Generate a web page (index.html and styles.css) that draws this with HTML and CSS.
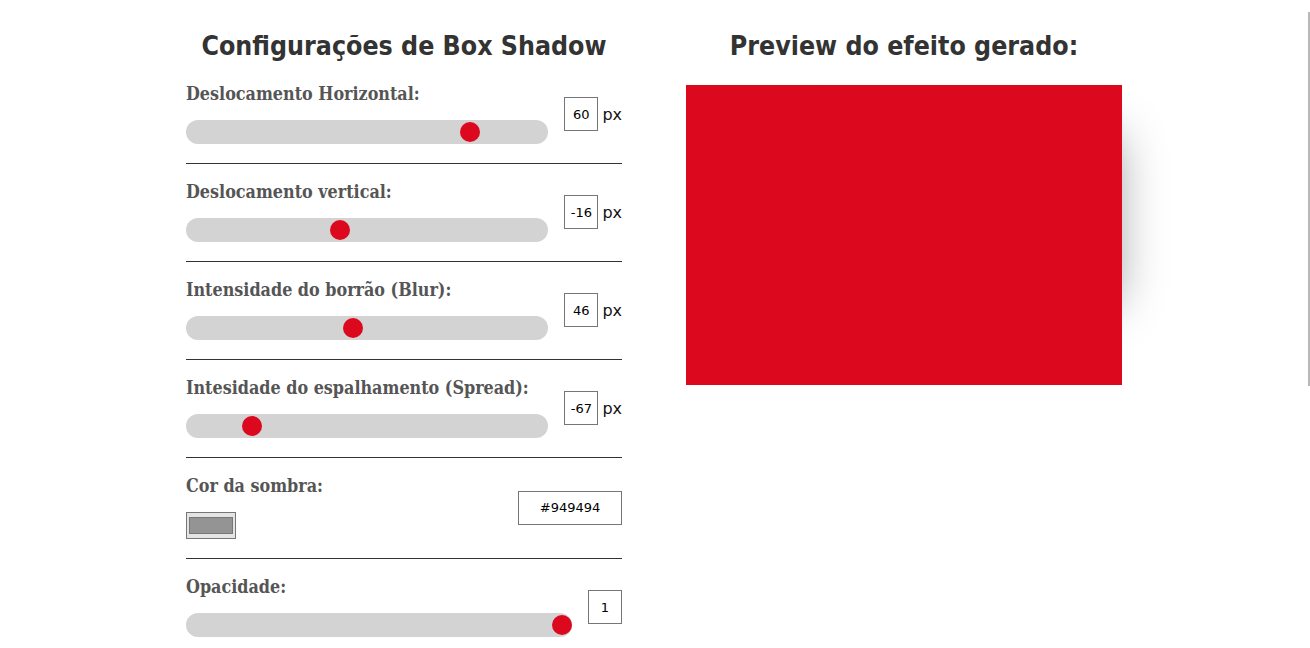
FILE: index.html
```html
<!DOCTYPE html>
<html lang="pt-BR">
<head>
<meta charset="utf-8">
<title>Box Shadow Generator</title>
<link rel="stylesheet" href="styles.css">
</head>
<body>
<div class="page">
  <section class="panel">
    <h2 class="title">Configurações de Box Shadow</h2>

    <div class="field">
      <div class="field-main">
        <label class="field-label">Deslocamento Horizontal:</label>
        <input type="range" class="slider" min="-100" max="100" value="60">
      </div>
      <div class="field-value">
        <input type="text" class="num" value="60"><span class="unit">px</span>
      </div>
    </div>

    <div class="field">
      <div class="field-main">
        <label class="field-label">Deslocamento vertical:</label>
        <input type="range" class="slider" min="-100" max="100" value="-16">
      </div>
      <div class="field-value">
        <input type="text" class="num" value="-16"><span class="unit">px</span>
      </div>
    </div>

    <div class="field">
      <div class="field-main">
        <label class="field-label">Intensidade do borrão (Blur):</label>
        <input type="range" class="slider" min="0" max="100" value="46">
      </div>
      <div class="field-value">
        <input type="text" class="num" value="46"><span class="unit">px</span>
      </div>
    </div>

    <div class="field">
      <div class="field-main">
        <label class="field-label">Intesidade do espalhamento (Spread):</label>
        <input type="range" class="slider" min="-100" max="100" value="-67">
      </div>
      <div class="field-value">
        <input type="text" class="num" value="-67"><span class="unit">px</span>
      </div>
    </div>

    <div class="field">
      <div class="field-main">
        <label class="field-label">Cor da sombra:</label>
        <input type="color" class="color" value="#949494">
      </div>
      <div class="field-value">
        <input type="text" class="hex" value="#949494">
      </div>
    </div>

    <div class="field">
      <div class="field-main">
        <label class="field-label">Opacidade:</label>
        <input type="range" class="slider" min="0" max="1" step="0.1" value="1">
      </div>
      <div class="field-value">
        <input type="text" class="num" value="1">
      </div>
    </div>
  </section>

  <section class="panel">
    <h2 class="title">Preview do efeito gerado:</h2>
    <div class="preview-box"></div>
  </section>
</div>
<div class="scroll-thumb"></div>
</body>
</html>
```

FILE: styles.css
```css
html, body {
  margin: 0;
  padding: 0;
  overflow: hidden;
  background: #ffffff;
}

body {
  padding-right: 2px;
  font-family: "DejaVu Sans", sans-serif;
  color: #222;
}

.page {
  width: 936px;
  margin: 0 auto;
  display: grid;
  grid-template-columns: 436px 436px;
  column-gap: 64px;
}

.panel {
  display: flex;
  flex-direction: column;
}

.title {
  margin: 31px 0 5px;
  font-family: "DejaVu Sans Condensed", "DejaVu Sans", sans-serif;
  font-weight: bold;
  font-size: 26.5px;
  line-height: 30px;
  color: #333;
  text-align: center;
  white-space: nowrap;
}

.field {
  display: flex;
  align-items: center;
  gap: 16px;
  padding: 18px 0 19px;
  border-bottom: 1px solid #333;
}

.field:last-child {
  border-bottom: none;
}

.field-main {
  flex: 1;
  display: flex;
  flex-direction: column;
  gap: 16px;
  min-width: 0;
}

.field-label {
  font-family: "DejaVu Serif Condensed", "DejaVu Serif", serif;
  font-weight: bold;
  font-size: 17.8px;
  line-height: 20px;
  color: #555;
  white-space: nowrap;
}

.field-value {
  display: flex;
  align-items: center;
  gap: 4px;
}

.slider {
  -webkit-appearance: none;
  appearance: none;
  display: block;
  width: 100%;
  height: 24px;
  margin: 0;
  background: #d3d3d3;
  border-radius: 12px;
  outline: none;
}

.slider::-webkit-slider-thumb {
  -webkit-appearance: none;
  appearance: none;
  width: 20px;
  height: 20px;
  border-radius: 50%;
  background: #dc081e;
  border: none;
  cursor: pointer;
}

.num,
.hex {
  box-sizing: border-box;
  height: 34px;
  margin: 0;
  padding: 0;
  border: 1px solid #767676;
  border-radius: 0;
  font-family: "DejaVu Sans", sans-serif;
  font-size: 13px;
  color: #000;
  text-align: center;
  background: #fff;
}

.num {
  width: 34px;
}

.hex {
  width: 104px;
}

.unit {
  font-family: "DejaVu Sans", sans-serif;
  font-size: 16px;
  color: #111;
}

.color {
  -webkit-appearance: none;
  appearance: none;
  display: block;
  box-sizing: border-box;
  width: 50px;
  height: 27px;
  margin: 0;
  padding: 0;
  border: 1px solid #767676;
  background: #e4e4e4;
}

.color::-webkit-color-swatch-wrapper {
  padding: 4px 2px;
}

.color::-webkit-color-swatch {
  border: 1px solid #777;
}

.preview-box {
  width: 436px;
  height: 300px;
  margin-top: 19px;
  background: #dc081e;
  box-shadow: 60px -16px 46px -67px #949494;
}

.scroll-thumb {
  position: fixed;
  top: 12px;
  right: 0;
  width: 2px;
  height: 374px;
  background: #b8b8b8;
}
```
